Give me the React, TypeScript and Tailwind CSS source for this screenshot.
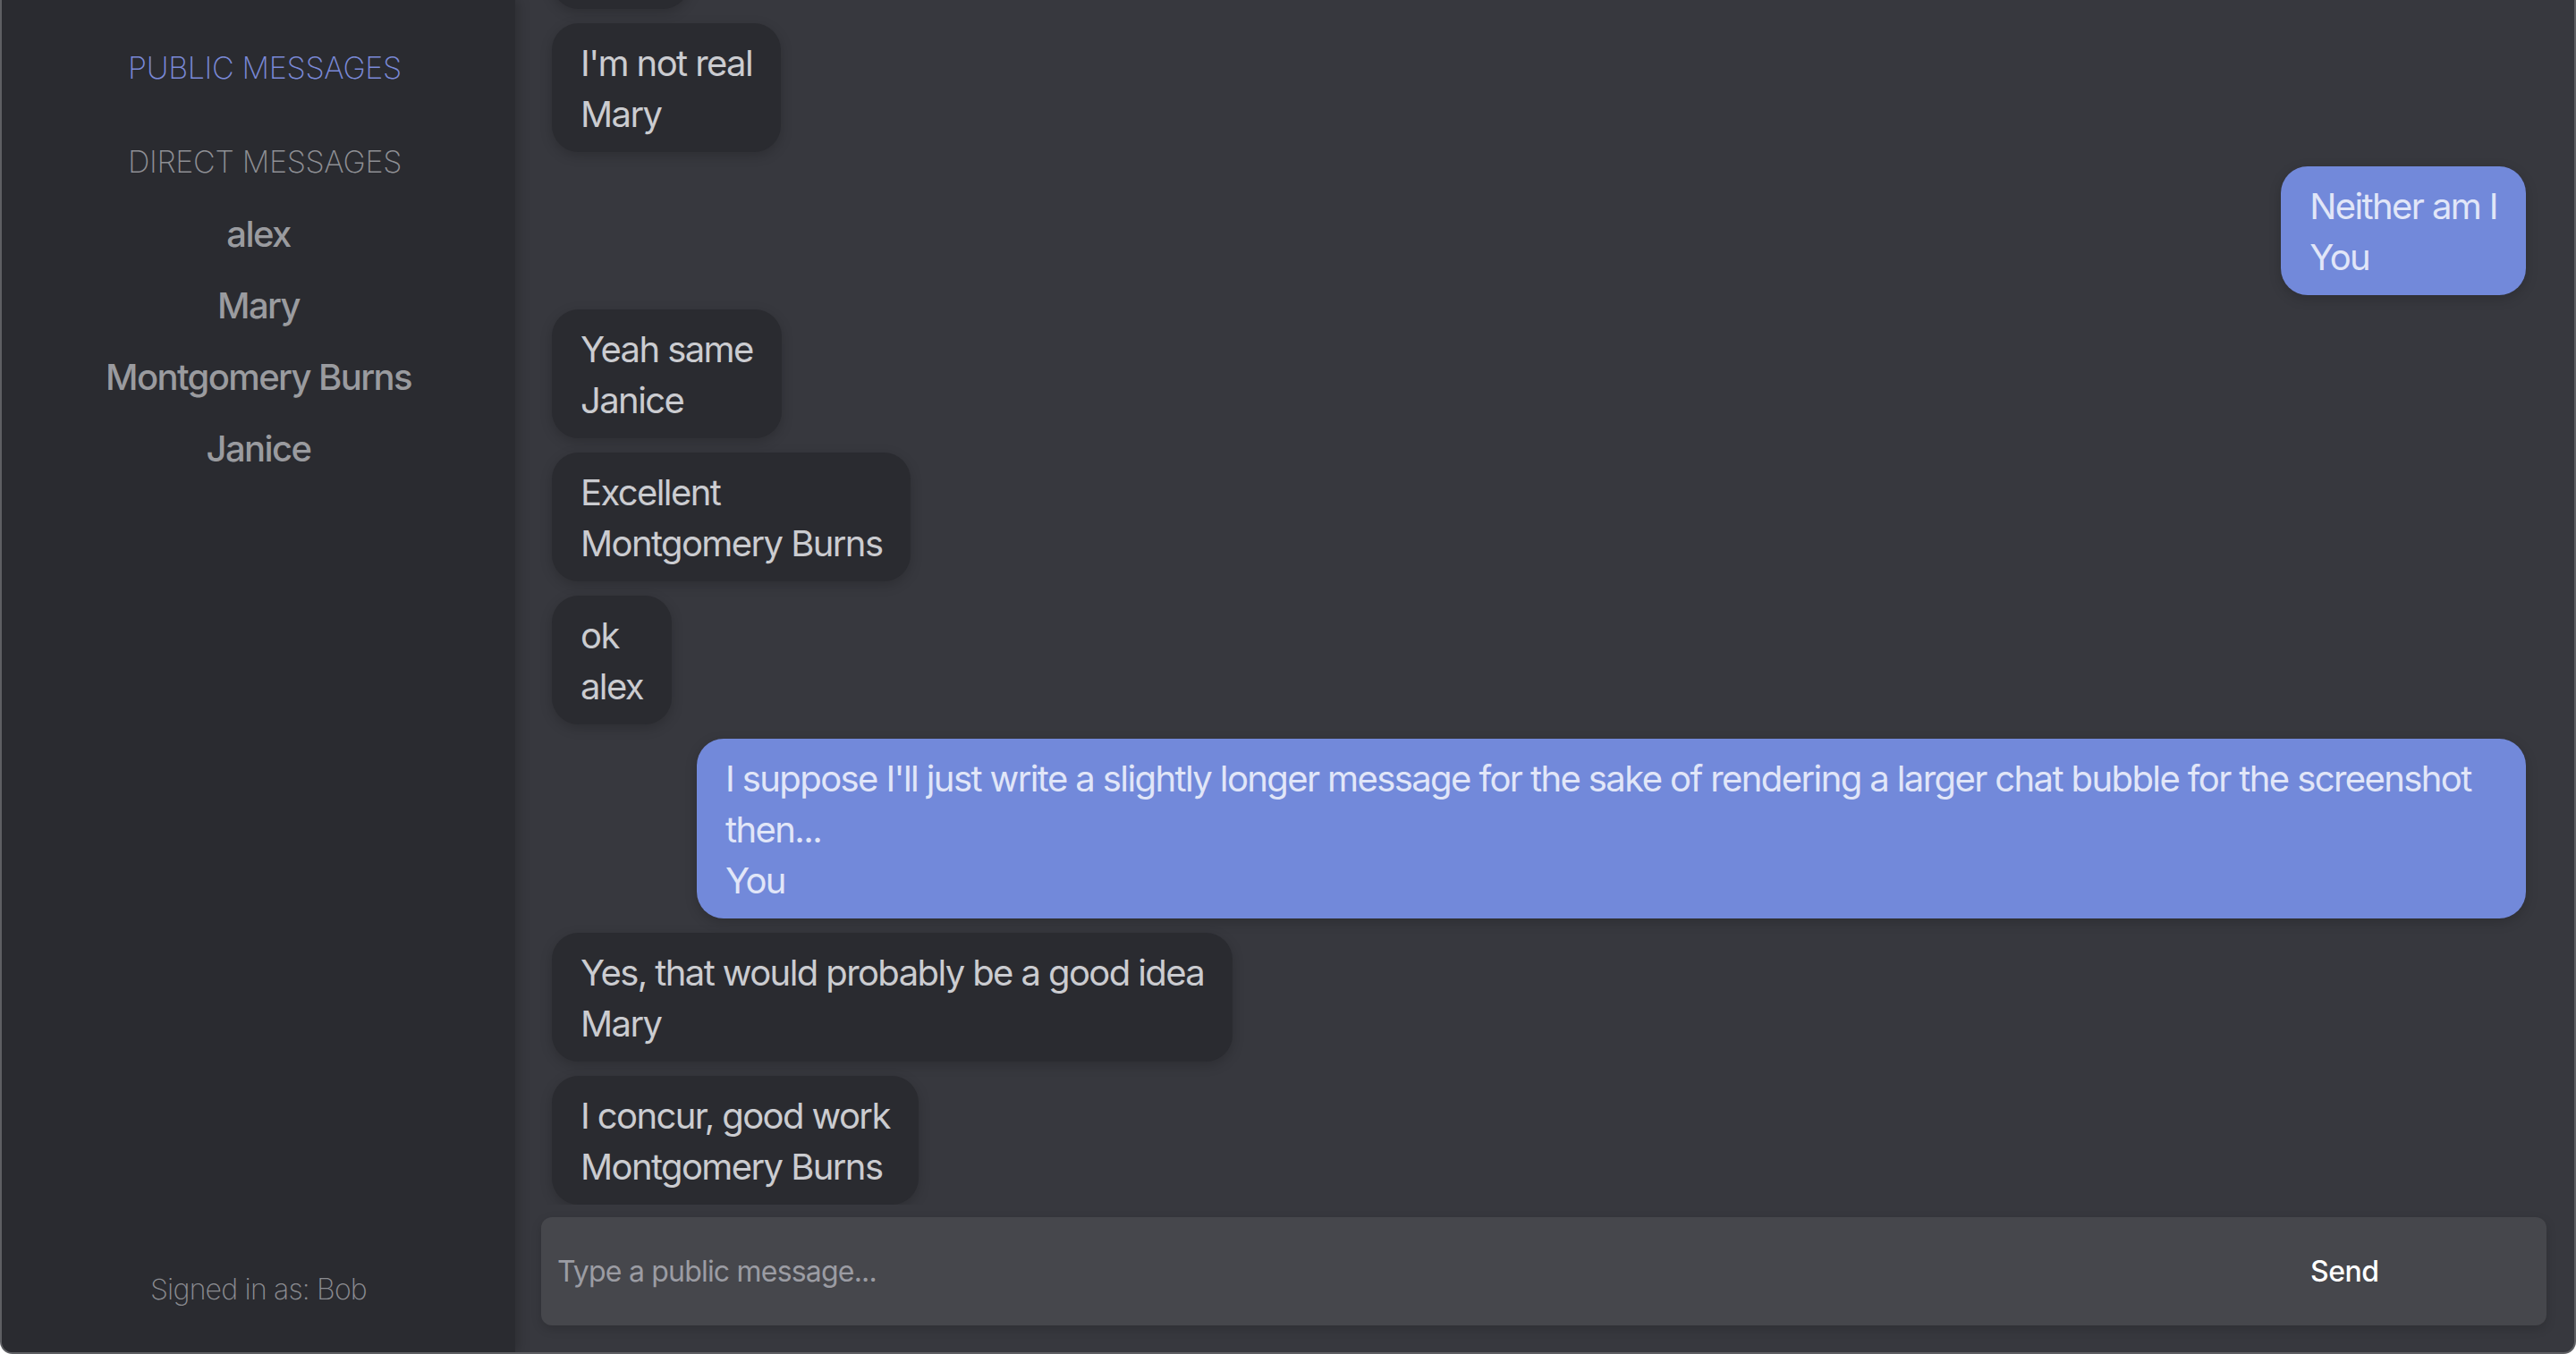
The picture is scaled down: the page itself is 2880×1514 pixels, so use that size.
import React from "react";

type Msg = { text: string; from: string; me?: boolean };

const messages: Msg[] = [
  { text: "Hello", from: "Mary" },
  { text: "I'm not real", from: "Mary" },
  { text: "Neither am I", from: "You", me: true },
  { text: "Yeah same", from: "Janice" },
  { text: "Excellent", from: "Montgomery Burns" },
  { text: "ok", from: "alex" },
  {
    text: "I suppose I'll just write a slightly longer message for the sake of rendering a larger chat bubble for the screenshot then...",
    from: "You",
    me: true,
  },
  { text: "Yes, that would probably be a good idea", from: "Mary" },
  { text: "I concur, good work", from: "Montgomery Burns" },
];

const users = ["alex", "Mary", "Montgomery Burns", "Janice"];

function Bubble({ m }: { m: Msg }) {
  return (
    <div
      className={
        m.me
          ? "self-end shrink-0 max-w-[2045px] rounded-[30px] bg-[#7289da] px-8 pt-[16px] pb-[14px] text-[40px] leading-[57px] tracking-[-1.6px] text-[#e1e6f8] shadow-[0_4px_14px_rgba(0,0,0,0.18)]"
          : "self-start shrink-0 max-w-[2045px] rounded-[30px] bg-[#2a2b30] px-8 pt-[16px] pb-[14px] text-[40px] leading-[57px] tracking-[-1.6px] text-[#cbccd0] shadow-[0_4px_14px_rgba(0,0,0,0.18)]"
      }
    >
      <div>{m.text}</div>
      <div>{m.from}</div>
    </div>
  );
}

export default function App() {
  return (
    <div className="flex h-[1514px] w-full overflow-hidden rounded-b-[14px] border-x-2 border-b-2 border-[#5e5f63] bg-[#37383e] font-['Inter',sans-serif]">
      <aside className="relative z-10 flex w-[574px] shrink-0 flex-col items-center bg-[#2a2b30] pb-[30px] pt-[35px] shadow-[4px_0_12px_rgba(0,0,0,0.18)]">
        <div className="flex h-[80px] items-center pl-[14px] text-[34px] font-extralight tracking-[-0.3px] text-[#7b8ad8]">
          PUBLIC MESSAGES
        </div>
        <div className="mt-[25px] mb-[2px] flex h-[80px] items-center pl-[14px] text-[34px] font-extralight tracking-[-0.3px] text-[#8f9095]">
          DIRECT MESSAGES
        </div>
        {users.map((u) => (
          <div
            key={u}
            className="flex h-[80px] items-center text-[40px] font-medium tracking-[-1.6px] text-[#9a9b9f]"
          >
            {u}
          </div>
        ))}
        <div className="mt-auto flex h-[80px] items-center text-[32px] font-extralight tracking-[-0.8px] text-[#8c8d92]">
          Signed in as: Bob
        </div>
      </aside>
      <main className="flex min-w-0 flex-1 flex-col">
        <div className="flex min-h-0 flex-1 flex-col justify-end gap-4 overflow-hidden pl-[41px] pr-[54px]">
          {messages.map((m, i) => (
            <Bubble key={i} m={m} />
          ))}
        </div>
        <div className="pb-[30px] pl-[29px] pr-[31px] pt-[14px]">
          <div className="flex h-[121px] items-center rounded-[12px] bg-[#46474c] pl-[18px] pr-[189px] shadow-[0_4px_12px_rgba(0,0,0,0.15)]">
            <input
              className="min-w-0 flex-1 bg-transparent text-[32px] tracking-[-0.8px] text-[#e0e0e0] outline-none placeholder:text-[#9b9ca3]"
              placeholder="Type a public message..."
            />
            <button className="w-[75px] text-center text-[32px] font-medium tracking-[-0.5px] text-white">
              Send
            </button>
          </div>
        </div>
      </main>
    </div>
  );
}
